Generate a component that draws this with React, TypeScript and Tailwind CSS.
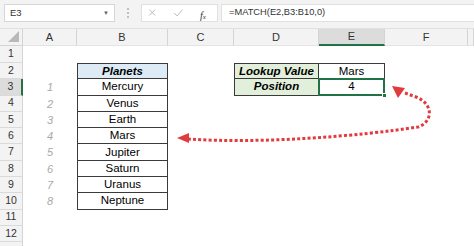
import React from 'react';

const planets = ['Mercury', 'Venus', 'Earth', 'Mars', 'Jupiter', 'Saturn', 'Uranus', 'Neptune'];
const colLetters = ['A', 'B', 'C', 'D', 'E', 'F', ''];

const font = { fontFamily: '"Liberation Sans", Arial, sans-serif' };

const RowHeader: React.FC<{ n: number }> = ({ n }) => (
  <div
    className={`flex items-center justify-center text-[10.5px] border-b border-[#dadada] ${
      n === 3
        ? 'bg-[#dcdcdc] text-[#333] border-r-2 border-r-[#217346]'
        : 'bg-[#f3f3f3] text-[#333] border-r border-r-[#d4d4d4]'
    }`}
  >
    {n}
  </div>
);

export default function App() {
  const rows = Array.from({ length: 12 }, (_, i) => i + 1);

  const renderRow = (r: number) => {
    const cells: React.ReactNode[] = [<RowHeader key="h" n={r} />];
    // Column A: index numbers
    cells.push(
      <div key="A" className="flex items-center justify-center italic text-[11px] text-[#a9a9a9]">
        {r >= 3 && r <= 10 ? r - 2 : ''}
      </div>
    );
    // Column B: planets table
    if (r === 2) {
      cells.push(
        <div key="B" className="flex items-center justify-center border border-[#3a3a3a] bg-[#ddebf7] font-bold italic text-[11.5px] text-black">
          Planets
        </div>
      );
    } else if (r >= 3 && r <= 10) {
      cells.push(
        <div key="B" className="flex items-center justify-center border-x border-b border-[#3a3a3a] text-[11.5px] text-black">
          {planets[r - 3]}
        </div>
      );
    } else {
      cells.push(<div key="B" />);
    }
    cells.push(<div key="C" />);
    // Columns D and E: lookup table
    if (r === 2) {
      cells.push(
        <div key="D" className="flex items-center justify-center border border-[#3a3a3a] bg-[#e2efda] font-bold italic text-[11.5px] text-black">
          Lookup Value
        </div>
      );
      cells.push(
        <div key="E" className="flex items-center justify-center border-y border-r border-[#3a3a3a] text-[11.5px] text-black">
          Mars
        </div>
      );
    } else if (r === 3) {
      cells.push(
        <div key="D" className="flex items-center justify-center border-x border-b border-[#3a3a3a] bg-[#e2efda] font-bold italic text-[11.5px] text-black">
          Position
        </div>
      );
      cells.push(
        <div key="E" className="relative flex items-center justify-center border-r border-b border-[#3a3a3a] text-[11.5px] text-black">
          4
          <div className="absolute -left-px -top-px -right-px -bottom-px border-2 border-[#217346]" />
          <div className="absolute -right-[3px] -bottom-[3px] w-[5px] h-[5px] bg-[#217346] border border-white" />
        </div>
      );
    } else {
      cells.push(<div key="D" />);
      cells.push(<div key="E" />);
    }
    cells.push(<div key="F" />);
    cells.push(<div key="G" />);
    return cells;
  };

  return (
    <div className="relative w-[474px] h-[246px] overflow-hidden bg-white" style={font}>
      {/* formula bar */}
      <div className="flex items-center h-[29px] bg-[#f3f3f3] border-b border-[#e0e0e0] pl-[4px] pb-[2px]">
        <div className="flex items-center justify-between w-[111px] h-[18px] bg-white border border-[#d6d6d6] px-[5px] text-[9.5px] text-[#333]">
          <span>E3</span>
          <span className="text-[6px] text-[#666]">▼</span>
        </div>
        <div className="flex flex-col items-center gap-[2px] w-[26px]">
          <span className="w-[2px] h-[2px] bg-[#c0c0c0]" />
          <span className="w-[2px] h-[2px] bg-[#c0c0c0]" />
          <span className="w-[2px] h-[2px] bg-[#c0c0c0]" />
        </div>
        <div className="flex items-center h-[18px] w-[77px] bg-white border border-[#e0e0e0]">
          <svg width="77" height="18" viewBox="0 0 77 18">
            <path d="M7.5 5.5 L13.5 11.5 M13.5 5.5 L7.5 11.5" stroke="#b8b8b8" strokeWidth="1" fill="none" />
            <path d="M33 9 L36 12 L41.5 5.5" stroke="#b8b8b8" strokeWidth="1" fill="none" />
          </svg>
        </div>
        <span
          className="absolute left-[200px] top-[8px] italic text-[10px] text-[#333]"
          style={{ fontFamily: '"Liberation Serif", serif' }}
        >
          f<span className="text-[7px]">x</span>
        </span>
        <div className="flex items-center flex-1 h-[18px] ml-[3px] bg-white border-y border-l border-[#e0e0e0] pl-[7px] text-[9.3px] text-[#333]">
          =MATCH(E2,B3:B10,0)
        </div>
      </div>

      {/* sheet grid */}
      <div className="grid grid-cols-[23px_54px_91px_66px_85px_66px_83px_1fr] grid-rows-[17px_17px_repeat(11,16.3px)_1fr] h-[217px]">
        <div className="relative bg-[#f3f3f3] border-r border-b border-[#d4d4d4]">
          <div className="absolute right-[3px] bottom-[3px] w-0 h-0 border-l-[11px] border-l-transparent border-b-[11px] border-b-[#b9b9b9]" />
        </div>
        {colLetters.map((l, i) => (
          <div
            key={l + i}
            className={`flex items-center justify-center text-[11px] border-r border-[#d4d4d4] text-[#333] ${
              l === 'E'
                ? 'bg-[#dcdcdc] border-b-2 border-b-[#217346]'
                : 'bg-[#f3f3f3] border-b border-b-[#e4e4e4]'
            }`}
          >
            {l}
          </div>
        ))}
        {rows.map((r) => (
          <React.Fragment key={r}>{renderRow(r)}</React.Fragment>
        ))}
        <div className="bg-[#f3f3f3] border-r border-[#d4d4d4]" />
      </div>

      {/* dotted arrow linking Mars to the result */}
      <svg className="absolute left-0 top-0 pointer-events-none" width="474" height="246" viewBox="0 0 474 246">
        <path
          d="M188 139 C 260 144, 360 136, 418 127 C 433 122, 434 104, 416 97 L 405 93"
          stroke="#e23b3f"
          strokeWidth="3"
          strokeDasharray="3 2.2"
          fill="none"
        />
        <polygon points="177,138 189,133 189,143" fill="#e23b3f" />
        <polygon points="392,86 405,88 398,98" fill="#e23b3f" />
      </svg>
    </div>
  );
}
